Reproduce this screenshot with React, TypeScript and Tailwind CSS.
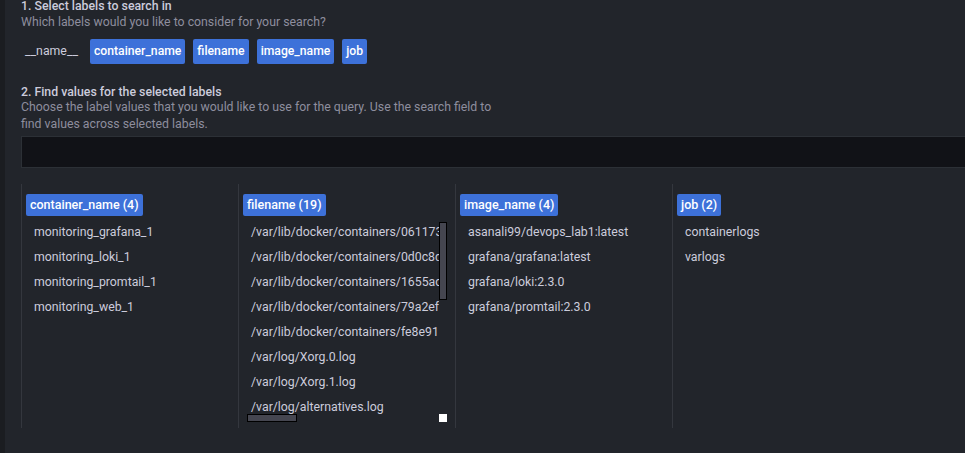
const labels = [
  { name: "__name__", selected: false },
  { name: "container_name", selected: true },
  { name: "filename", selected: true },
  { name: "image_name", selected: true },
  { name: "job", selected: true },
];

const columns = [
  {
    label: "container_name",
    values: ["monitoring_grafana_1", "monitoring_loki_1", "monitoring_promtail_1", "monitoring_web_1"],
  },
  {
    label: "filename",
    count: 19,
    scroll: true,
    values: [
      "/var/lib/docker/containers/0611738f2a4c1e5b7d9e3f60a1b2c4d5e6f7-json.log",
      "/var/lib/docker/containers/0d0c8d1e2f3a4b5c6d7e8f9a0b1c2d3e4f5a-json.log",
      "/var/lib/docker/containers/1655ac3b4c5d6e7f8a9b0c1d2e3f4a5b6c7d-json.log",
      "/var/lib/docker/containers/79a2ef4c5d6e7f8a9b0c1d2e3f4a5b6c7d8e-json.log",
      "/var/lib/docker/containers/fe8e915d6e7f8a9b0c1d2e3f4a5b6c7d8e9f-json.log",
      "/var/log/Xorg.0.log",
      "/var/log/Xorg.1.log",
      "/var/log/alternatives.log",
      "/var/log/apport.log",
      "/var/log/auth.log",
    ],
  },
  {
    label: "image_name",
    values: ["asanali99/devops_lab1:latest", "grafana/grafana:latest", "grafana/loki:2.3.0", "grafana/promtail:2.3.0"],
  },
  { label: "job", values: ["containerlogs", "varlogs"] },
];

function Badge({ children }: { children: React.ReactNode }) {
  return (
    <span className="inline-flex h-[22px] items-center rounded-[2px] bg-[#3d71d9] px-[4px] text-[12.5px] font-medium text-white">
      {children}
    </span>
  );
}

function ValueList({ values }: { values: string[] }) {
  return (
    <ul>
      {values.map((v) => (
        <li key={v} className="h-[25px] whitespace-nowrap pl-[8px] text-[12.3px] leading-[25px]">
          {v}
        </li>
      ))}
    </ul>
  );
}

export default function App() {
  return (
    <div
      className="flex h-[453px] w-[965px] overflow-hidden bg-[#22252b] text-[#ccccdc]"
      style={{ fontFamily: "Roboto, 'Liberation Sans', sans-serif" }}
    >
      <div className="w-[5px] shrink-0 bg-[#1b1d21]" />
      <main className="flex-1 pl-[16px]">
        <h2 className="text-[12.3px] font-medium leading-[12px]">1. Select labels to search in</h2>
        <p className="mt-[2px] text-[12.3px] leading-[16px] text-[#8e8e9e]">
          Which labels would you like to consider for your search?
        </p>

        <div className="mt-[9px] flex h-[25px] items-stretch gap-[8px]">
          {labels.map((l) => (
            <span
              key={l.name}
              className={
                l.selected
                  ? "flex items-center rounded-[2px] bg-[#3d71d9] px-[4px] text-[12.2px] font-medium text-white"
                  : "flex items-center px-[4px] text-[12.3px] text-[#ccccdc]"
              }
            >
              {l.name}
            </span>
          ))}
        </div>

        <h2 className="mt-[22px] text-[12.3px] font-medium leading-[12px]">
          2. Find values for the selected labels
        </h2>
        <p className="mt-[1px] max-w-[478px] text-[12.3px] leading-[17px] text-[#8e8e9e]">
          Choose the label values that you would like to use for the query. Use the search field to find values
          across selected labels.
        </p>

        <div className="mt-[3px] h-[32px] w-[980px] border border-[#2c3036] bg-[#111217]" />

        <div className="mt-[16px] flex h-[244px]">
          {columns.map((col) => (
            <section key={col.label} className="flex w-[217px] shrink-0 flex-col border-l border-[#34373e] pl-[4px] pt-[8px]">
              <div>
                <Badge>
                  {col.label} ({col.count ?? col.values.length})
                </Badge>
              </div>
              {col.scroll ? (
                <div className="relative mt-[4px] h-[202px] w-[204px]">
                  <div className="h-full w-[196px] overflow-hidden">
                    <ValueList values={col.values} />
                  </div>
                  <div className="absolute left-[196px] top-[2px] h-[78px] w-[8px] border border-black bg-[#454650]" />
                  <div className="absolute left-[4px] top-[194px] h-[8px] w-[50px] border border-black bg-[#454650]" />
                  <div className="absolute left-[196px] top-[194px] h-[8px] w-[8px] bg-white" />
                </div>
              ) : (
                <div className="mt-[4px]">
                  <ValueList values={col.values} />
                </div>
              )}
            </section>
          ))}
        </div>
      </main>
    </div>
  );
}
